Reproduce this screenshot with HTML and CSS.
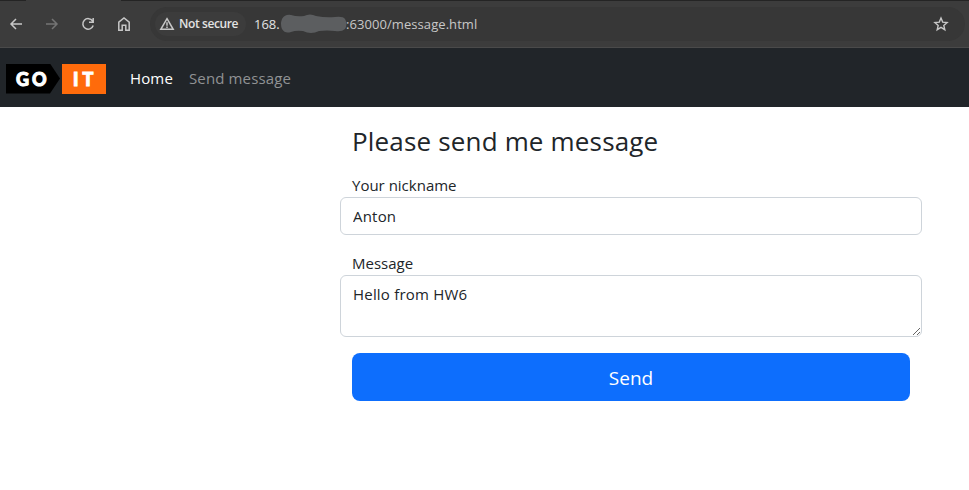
FILE: index.html
```html
<!DOCTYPE html>
<html lang="en">
<head>
<meta charset="utf-8">
<title>Send message</title>
<link rel="stylesheet" href="styles.css">
</head>
<body>
<div class="toolbar">
  <div class="nav-buttons">
    <svg width="16" height="16" viewBox="0 0 16 16"><path d="M14 8H3M8 3L3 8l5 5"/></svg>
    <svg class="disabled" width="16" height="16" viewBox="0 0 16 16"><path d="M2 8h11M8 3l5 5-5 5"/></svg>
    <svg width="16" height="16" viewBox="0 0 16 16"><path d="M12.6 5A5.3 5.3 0 1 0 13.2 9.6M13.2 2v4.3H9"/></svg>
    <svg width="16" height="16" viewBox="0 0 16 16"><path d="M2.8 6.2L8 2l5.200 4.200V14.200H9.800V9.300H6.200v4.900H2.800z"/></svg>
  </div>
  <div class="address">
    <div class="chip">
      <svg width="16" height="16" viewBox="0 0 16 16"><path d="M8 2.700L14.200 13.300H1.800zM8 6.300v3.500M8 10.500v1.600"/></svg>
      <span class="secure">Not secure</span>
    </div>
    <span class="host">168.</span>
    <svg class="scribble" width="66" height="20" viewBox="0 0 66 20"><path d="M1 5Q4 0 10 1Q16 3 23 2Q29-1 35 2Q45 4 54 3Q62 2 64 5Q67 10 64 15Q61 18 54 17Q46 16 38 17Q30 21 22 17Q15 16 10 18Q4 20 1 15Q-1 10 1 5z"/></svg>
    <span class="path">:63000/message.html</span>
    <svg class="star" width="16" height="16" viewBox="0 0 16 16"><path d="M8 2l1.700 4.100 4.400.4-3.300 2.900 1 4.300L8 11.400l-3.800 2.300 1-4.300-3.300-2.900 4.400-.4z"/></svg>
  </div>
</div>
<nav class="navbar">
  <div class="logo"><span class="go">GO</span><span class="it">IT</span></div>
  <a class="link active">Home</a>
  <a class="link send-link">Send message</a>
</nav>
<main class="form">
  <h1>Please send me message</h1>
  <label for="nick">Your nickname</label>
  <input id="nick" class="field" type="text" value="Anton">
  <label for="msg">Message</label>
  <textarea id="msg" class="field">Hello from HW6</textarea>
  <button type="button">Send</button>
</main>
</body>
</html>
```
FILE: styles.css
```css
* { box-sizing: border-box; }
body { margin: 0; height: 490px; overflow: hidden; background: #fff; color: #212529; font: 15px/24px "Open Sans", "Noto Sans", sans-serif; }
svg { display: block; flex: none; fill: none; stroke: #c7c7c7; stroke-width: 1.500; }
.toolbar { height: 48px; display: flex; align-items: center; padding: 0 4px 0 8px; background: linear-gradient(#242424, #242424) 0 0 / 26px 1px no-repeat, linear-gradient(#242424, #242424) 121px 0 / 848px 1px no-repeat, #3c3c3c; border-bottom: 1px solid #4a4a4a; }
.nav-buttons { display: flex; gap: 20px; width: 142px; }
.disabled { stroke: #747474; }
.address { flex: 1; height: 34px; border-radius: 17px; background: #373737; display: flex; align-items: center; padding: 0 16px 0 5px; color: #c7c7c7; font-size: 13px; line-height: 20px; white-space: nowrap; }
.chip { width: 91px; height: 24px; border-radius: 12px; background: #3c3c3c; display: flex; align-items: center; padding-left: 4px; gap: 4px; margin-right: 8px; }
.secure { font-size: 12px; font-weight: 600; letter-spacing: -.4px; color: #e3e3e3; }
.host { width: 27px; color: #e3e3e3; }
.scribble { fill: #5c5e60; stroke: none; margin-right: -1px; }
.path { letter-spacing: .07px; }
.star { margin-left: auto; stroke-width: 1.400; }
.navbar { height: 59px; display: flex; align-items: center; background: #212529; padding: 2px 6px 0; }
.logo { display: flex; gap: 2px; width: 100px; height: 30px; margin-right: 24px; color: #fff; font: 900 18px/30px Lato, sans-serif; -webkit-text-stroke: 1px #fff; }
.go { width: 54px; background: #000; clip-path: polygon(0 0, 44px 0, 100% 50%, 44px 100%, 0 100%); padding-left: 10px; letter-spacing: 3px; }
.it { width: 44px; background: #ff6b0b; padding-left: 11px; letter-spacing: 4px; }
.link { color: #909294; margin-right: 16px; padding-bottom: 2px; letter-spacing: .14px; }
.active { color: #fff; }
.form { width: 582px; margin-left: 340px; padding-top: 17px; }
h1 { margin: 0 0 15px; padding-left: 12px; font-size: 26px; letter-spacing: .17px; line-height: 34px; font-weight: 400; }
label { display: block; padding-left: 12px; }
.field { display: block; width: 100%; margin: 0 0 16px; padding: 6px 12px; border: 1px solid #ced4da; border-radius: 6px; background: #fff; color: #212529; font: inherit; letter-spacing: .2px; outline: 0; }
input.field { height: 38px; }
textarea.field { height: 62px; resize: vertical; }
button { display: block; width: 558px; height: 48px; margin-left: 12px; padding: 2px 0 0; border: 0; border-radius: 8px; background: #0d6efd; color: #fff; font: 19px/30px "Open Sans", sans-serif; }
```
